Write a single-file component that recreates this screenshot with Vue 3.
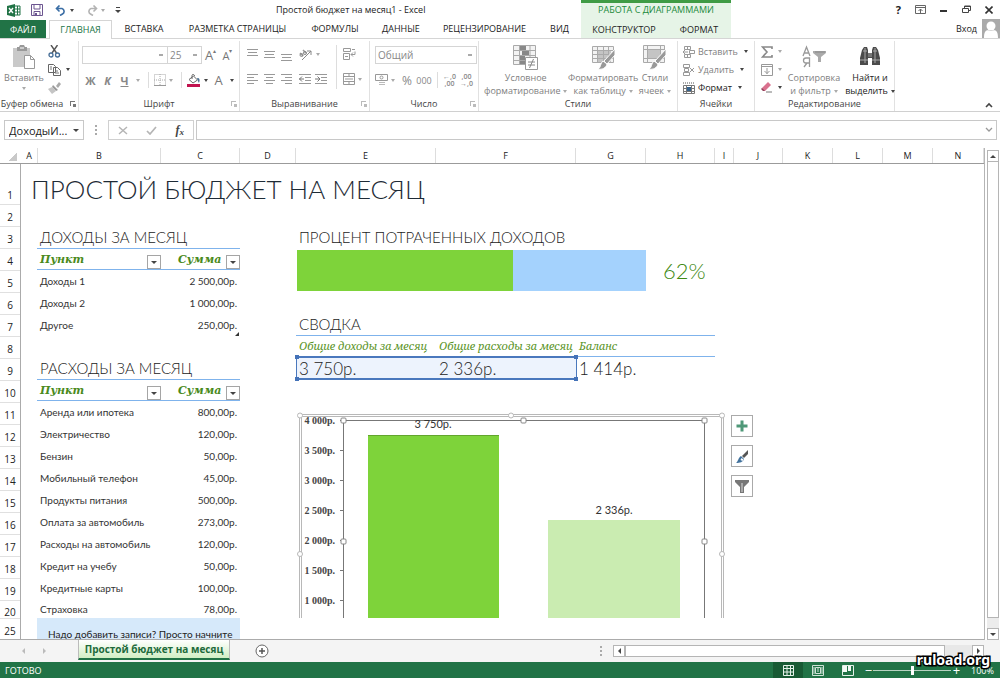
<script setup>
import { ref } from 'vue'

const tabs = ['ФАЙЛ', 'ГЛАВНАЯ', 'ВСТАВКА', 'РАЗМЕТКА СТРАНИЦЫ', 'ФОРМУЛЫ', 'ДАННЫЕ', 'РЕЦЕНЗИРОВАНИЕ', 'ВИД']
const columns = 'ABCDEFGHIJKLMN'.split('')
const rows = [1, 2, 3, 4, 5, 6, 7, 8, 9, 10, 11, 12, 13, 14, 15, 16, 17, 18, 19, 20, 25]
const tables = [
  {
    title: 'ДОХОДЫ ЗА МЕСЯЦ',
    items: [['Доходы 1', '2 500,00р.'], ['Доходы 2', '1 000,00р.'], ['Другое', '250,00р.']]
  },
  {
    title: 'РАСХОДЫ ЗА МЕСЯЦ',
    items: [
      ['Аренда или ипотека', '800,00р.'],
      ['Электричество', '120,00р.'],
      ['Бензин', '50,00р.'],
      ['Мобильный телефон', '45,00р.'],
      ['Продукты питания', '500,00р.'],
      ['Оплата за автомобиль', '273,00р.'],
      ['Расходы на автомобиль', '120,00р.'],
      ['Кредит на учебу', '50,00р.'],
      ['Кредитные карты', '100,00р.'],
      ['Страховка', '78,00р.']
    ]
  }
]
const axis = ['4 000р.', '3 500р.', '3 000р.', '2 500р.', '2 000р.', '1 500р.', '1 000р.']
const spent = 62
const zoom = ref(50)
const nameBox = ref('ДоходыИ...')
const formula = ref('')
</script>

<template>
  <div class="app">
    <header class="top">
      <div class="top-left">
        <div class="titlebar">
          <div class="quick">
            <svg width="14" height="13" viewBox="0 0 14 13"><path d="M0 2 8 0v13L0 11z" fill="#217346"/><path d="M2 4l4 5M6 4 2 9" stroke="#fff" stroke-width="1.4"/><path d="M8 2h5v9H8M8 5h5M8 8h5M10.500 2v9" fill="none" stroke="#217346"/></svg>
            <button aria-label="Сохранить"><svg width="12" height="12" viewBox="0 0 12 12"><path d="M.5.500h11v11H.500z" fill="#fff" stroke="#6c5590"/><path d="M3 1v4h6V1M3 11V7.500h6V11" fill="none" stroke="#6c5590"/><path d="M4 9h2v3H4z" fill="#6c5590"/></svg></button>
            <button aria-label="Отменить"><svg width="12" height="11" viewBox="0 0 12 11"><path d="M1.500 3.500h5.500a3 3 0 0 1 .500 5.500L5 10.500M4.500.500l-3 3 3 3" fill="none" stroke="#3b6ea5" stroke-width="1.600"/></svg><i class="caret"></i></button>
            <button aria-label="Вернуть"><svg width="12" height="11" viewBox="0 0 12 11"><path d="M10.500 3.500H5a3 3 0 0 0-.500 5.500L7 10.500M7.500.500l3 3-3 3" fill="none" stroke="#b3b3b3" stroke-width="1.600"/></svg><i class="caret pale"></i></button>
            <button aria-label="Настройка панели"><svg width="6" height="8" viewBox="0 0 6 8"><path d="M1 1.500h4" stroke="#444"/><path d="M0 4h6L3 7z" fill="#444"/></svg></button>
          </div>
          <h1>Простой бюджет на месяц1 - Excel</h1>
        </div>
        <nav class="tabs">
          <button v-for="(t, i) in tabs" :key="t" :class="{ file: i === 0, active: i === 1 }">{{ t }}</button>
        </nav>
      </div>
      <div class="context">
        <div class="context-name">РАБОТА С ДИАГРАММАМИ</div>
        <nav><button>КОНСТРУКТОР</button><button>ФОРМАТ</button></nav>
      </div>
      <div class="top-right">
        <div class="win">
          <button aria-label="Справка" class="help">?</button>
          <button aria-label="Параметры ленты"><svg width="11" height="9" viewBox="0 0 11 9"><path d="M.500.500h10v8H.500zM1 2.500h9M5.500 8V4M3.500 6l2-2 2 2" fill="none" stroke="#666"/></svg></button>
          <button aria-label="Свернуть"><svg width="8" height="9" viewBox="0 0 8 9"><path d="M0 6h7" stroke="#333" stroke-width="2"/></svg></button>
          <button aria-label="Восстановить"><svg width="9" height="9" viewBox="0 0 9 9"><path d="M.500 3.500h6v4h-6zM2.500 3V1h6v4.500H7M2 1.500h6.500" fill="none" stroke="#444"/></svg></button>
          <button aria-label="Закрыть"><svg width="8" height="8" viewBox="0 0 8 8"><path d="M.500.500l7 7M7.500.500l-7 7" stroke="#333" stroke-width="1.600"/></svg></button>
        </div>
        <div class="login"><a href="#">Вход</a>
          <svg width="18" height="19" viewBox="0 0 18 19"><path d="M0 0h18v19H0z" fill="#aaa"/><circle cx="9" cy="7" r="4.500" fill="#fff"/><path d="M2 19c0-9 4-8 7-7 3-1 7-2 7 7z" fill="#fff"/></svg>
        </div>
      </div>
    </header>

    <section class="ribbon">
      <div class="group clip">
        <div class="body">
          <button class="big dim paste">
            <svg width="24" height="25" viewBox="0 0 24 25"><path d="M1 3h17v19H1z" fill="#c9c9c9"/><path d="M5 2h2l1-2h4l1 2h2v4H5z" fill="#999"/><path d="M8 3h4" stroke="#fff"/><path d="M12.500 10.500h6l4 4v9h-10z" fill="#fff" stroke="#999"/><path d="M18.500 10.500v4h4" fill="none" stroke="#999"/></svg>
            <span>Вставить</span><i class="caret pale"></i>
          </button>
          <div class="stack">
            <button aria-label="Вырезать"><svg width="13" height="13" viewBox="0 0 13 13"><path d="M3 0l5.500 8M9.500 0 4 8" stroke="#555" stroke-width="1.400"/><circle cx="3" cy="10" r="2" fill="none" stroke="#456d96" stroke-width="1.300"/><circle cx="9.500" cy="10" r="2" fill="none" stroke="#456d96" stroke-width="1.300"/></svg></button>
            <button aria-label="Копировать"><svg width="13" height="12" viewBox="0 0 13 12"><path d="M.500.500h5l2 2v6h-7zM5.500 3.500h4l3 3v5h-7z" fill="#fff" stroke="#666"/><path d="M2 3h2M2 5h2M7 7h3M7 9h4" stroke="#777"/></svg><i class="caret"></i></button>
            <button aria-label="Формат по образцу"><svg width="13" height="12" viewBox="0 0 13 12"><path d="M8 4l3-4 2 2-3 4z" fill="#aaa"/><path d="M5 3l5 5-2 1-4-4z" fill="#999"/><path d="M0 7l4-2 4 4-4 3z" fill="#c4c4c4"/></svg></button>
          </div>
        </div>
        <div class="label">Буфер обмена<i class="launch dark"></i></div>
      </div>

      <div class="group font">
        <div class="body">
          <div class="line">
            <select aria-label="Шрифт" class="sel-font"><option></option></select><select aria-label="Размер" class="sel-size"><option>25</option></select>
            <button class="let" aria-label="Увеличить размер">А<sup>▴</sup></button><button class="let sm" aria-label="Уменьшить размер">А<sup>▾</sup></button>
          </div>
          <div class="line tools-font">
            <button class="b">Ж</button><button class="b it">К</button><button class="b un">Ч</button><i class="caret pale"></i>
            <i class="vsep"></i>
            <button aria-label="Границы"><svg width="12" height="12" viewBox="0 0 12 12"><path d="M.500.500h11v11H.500zM6 0v12M0 6h12" fill="none" stroke="#aaa" stroke-dasharray="1 1"/><path d="M0 11.500h12" stroke="#999"/></svg></button><i class="caret pale"></i>
            <i class="vsep"></i>
            <button aria-label="Заливка"><svg width="14" height="13" viewBox="0 0 14 13"><path d="M2 5.500 6.500 2l4 4L6 9z" fill="#fff" stroke="#666"/><path d="M5 5V1.500C5 0 7.500 0 7.500 2" fill="none" stroke="#666"/><path d="M10 4c3 0 3 2 2 5-1-1-1-3-2-5" fill="#4b7193"/><path d="M0 10h13v3H0z" fill="#c1134f"/></svg></button><i class="caret"></i>
            <button class="let">А</button><i class="caret"></i>
          </div>
        </div>
        <div class="label">Шрифт<i class="launch"></i></div>
      </div>

      <div class="group align">
        <div class="body cols">
          <div class="agrid">
            <button aria-label="По верху"><svg width="11" height="14"><path d="M0 2.500h11M1 5.500h9M0 8.500h11" stroke="#999"/></svg></button>
            <button aria-label="По центру"><svg width="11" height="14"><path d="M0 4.500h11M1 7.500h9M0 10.500h11" stroke="#999"/></svg></button>
            <button aria-label="По низу"><svg width="11" height="14"><path d="M0 7.500h11M1 10.500h9M0 13.500h11" stroke="#999"/></svg></button>
            <button class="wide" aria-label="Ориентация"><svg width="13" height="13" viewBox="0 0 13 13"><path d="M3 12l9-9M12 7V3H8" fill="none" stroke="#888"/><path d="M1 5l3 3M4 2l3 3" stroke="#999" stroke-width="1.500"/><circle cx="2.500" cy="7" r="1.500" fill="none" stroke="#888"/><circle cx="6" cy="5" r="1.500" fill="none" stroke="#888"/></svg><i class="caret pale"></i></button>
            <button aria-label="По левому краю"><svg width="11" height="10"><path d="M0 .5h11M0 3.500h7M0 6.500h11M0 9.500h7" stroke="#999"/></svg></button>
            <button aria-label="По середине"><svg width="11" height="10"><path d="M0 .5h11M2 3.500h7M0 6.500h11M2 9.500h7" stroke="#999"/></svg></button>
            <button aria-label="По правому краю"><svg width="11" height="10"><path d="M0 .5h11M4 3.500h7M0 6.500h11M4 9.500h7" stroke="#999"/></svg></button>
            <button class="wide two" aria-label="Отступ"><svg width="12" height="10"><path d="M0 .5h12M6 3.500h6M6 6.500h6M0 9.500h12" stroke="#999"/><path d="M0 5h5M3 2.500 0.500 5 3 7.500" fill="none" stroke="#777"/></svg><svg width="12" height="10"><path d="M0 .5h12M6 3.500h6M6 6.500h6M0 9.500h12" stroke="#999"/><path d="M0 5h5M2.500 2.500 5 5 2.500 7.500" fill="none" stroke="#777"/></svg></button>
          </div>
          <i class="vsep tall"></i>
          <div class="stack2">
            <button aria-label="Перенести текст"><svg width="13" height="12" viewBox="0 0 13 12"><path d="M.500.500h7v3h-7zM.500 5.500h6v6h-6zM9 1.500h3M8 6.500h4v-3M10 4.500l-2 2 2 2M2 8.500h3" fill="none" stroke="#999"/></svg></button>
            <button aria-label="Объединить"><svg width="12" height="12" viewBox="0 0 12 12"><path d="M.500.500h11v11H.500zM0 3.500h12M0 8.500h12M6 0v3M6 9v3M2 6h8" fill="none" stroke="#999"/></svg><i class="caret pale"></i></button>
          </div>
        </div>
        <div class="label">Выравнивание<i class="launch"></i></div>
      </div>

      <div class="group num">
        <div class="body">
          <div class="line"><select aria-label="Числовой формат" class="sel-num"><option>Общий</option></select></div>
          <div class="line tools-num">
            <button aria-label="Денежный"><svg width="13" height="12" viewBox="0 0 13 12"><path d="M.500.500h12v6H.500z" fill="none" stroke="#999"/><circle cx="6.500" cy="3.500" r="1.500" fill="none" stroke="#999"/><path d="M4 8.500h6M4 10.500h6" stroke="#bbb"/></svg></button><i class="caret pale"></i>
            <button class="pct">%</button><button class="zeros">000</button><i class="vsep"></i>
            <button class="dec"><span>←,0</span><span>,00</span></button><button class="dec"><span>,00</span><span>→,0</span></button>
          </div>
        </div>
        <div class="label">Число<i class="launch"></i></div>
      </div>

      <div class="group styles">
        <div class="body">
          <button class="big dim">
            <svg width="25" height="25" viewBox="0 0 25 25"><path d="M.500.500h22v19H.500z" fill="#f3f3f3" stroke="#aaa"/><path d="M7 1h6v4H7zM9 6h7v4H9zM7 11h5v8H7z" fill="#888"/><path d="M0 5.500h23M0 10.500h23M0 15.500h23M6.500 0v20M17 0v20" stroke="#aaa"/><path d="M12.500 12.500h12v12h-12z" fill="#fff" stroke="#999"/><path d="M15 17h7M15 20h7M20.500 14l-4 9" stroke="#888"/></svg>
            <span>Условное</span><span>форматирование<i class="caret pale"></i></span>
          </button>
          <button class="big dim">
            <svg width="25" height="25" viewBox="0 0 25 25"><path d="M1.500 1.500h21v16h-21z" fill="#f3f3f3" stroke="#aaa"/><path d="M7 6h13v11H7z" fill="#c4c4c4"/><path d="M1 5.500h21M1 9.500h21M1 13.500h21M6.500 1v17M12.500 1v17M17.500 1v17" stroke="#aaa"/><path d="M24 4v6l-8 9-3-3z" fill="#999" stroke="#fff"/><path d="M12 16l4 3c-1 4-5 6-9 5 3-1 2-6 5-8" fill="#999" stroke="#fff"/></svg>
            <span>Форматировать</span><span>как таблицу<i class="caret pale"></i></span>
          </button>
          <button class="big dim">
            <svg width="25" height="25" viewBox="0 0 25 25"><path d="M1.500.500h21v17h-21z" fill="#f3f3f3" stroke="#aaa"/><path d="M6 5h13v9H6z" fill="#c4c4c4"/><path d="M1 4.500h21M1 13.500h21M5.500 1v17M18.500 1v17" stroke="#aaa"/><path d="M24 4v6l-8 9-3-3z" fill="#999" stroke="#fff"/><path d="M12 16l4 3c-1 4-5 6-9 5 3-1 2-6 5-8" fill="#999" stroke="#fff"/></svg>
            <span>Стили</span><span>ячеек<i class="caret pale"></i></span>
          </button>
        </div>
        <div class="label">Стили</div>
      </div>

      <div class="group cells">
        <div class="body">
          <button class="dim"><svg width="12" height="12" viewBox="0 0 12 12"><path d="M1.500.500h6v3h-6zM1.500 8.500h6v3h-6zM6.500 4.500h5v3h-5zM4.500 0v3M4.500 9v3M5 6H0M2 4 0 6l2 2" fill="none" stroke="#999"/></svg>Вставить<i class="caret"></i></button>
          <button class="dim"><svg width="12" height="12" viewBox="0 0 12 12"><path d="M.500.500h6v3h-6zM.500 8.500h6v3h-6zM1.500 4.500h4v3h-4zM7 4l4 4M11 4 7 8" fill="none" stroke="#999"/></svg>Удалить<i class="caret"></i></button>
          <button><svg width="12" height="12" viewBox="0 0 12 12"><path d="M.500 3.500h11v8H.500zM0 6.500h12M0 9.500h12M3.500 3v9M8.500 3v9" fill="none" stroke="#777"/><path d="M4 5h4v4H4z" fill="#35638d"/><path d="M0 1h12" stroke="#555" stroke-dasharray="1 1"/></svg>Формат<i class="caret"></i></button>
        </div>
        <div class="label">Ячейки</div>
      </div>

      <div class="group edit">
        <div class="body">
          <div class="stack">
            <button aria-label="Сумма"><svg width="12" height="12" viewBox="0 0 12 12"><path d="M11 3V1H1.500L6 6l-4.500 5H11V9" fill="none" stroke="#888" stroke-width="1.600"/></svg><i class="caret pale"></i></button>
            <button aria-label="Заполнить"><svg width="12" height="12" viewBox="0 0 12 12"><path d="M.500.500h11v11H.500zM0 2.500h12M6 4v6M3.500 7 6 9.500 8.500 7" fill="none" stroke="#999"/></svg><i class="caret pale"></i></button>
            <button aria-label="Очистить"><svg width="12" height="11" viewBox="0 0 12 11"><path d="M1 6 7 0l3 3-6 6H2z" fill="#d9718e"/><path d="M1 6l3 3H2L0 7z" fill="#8d4058"/><path d="M5 10h6" stroke="#777"/></svg><i class="caret"></i></button>
          </div>
          <button class="big dim sort">
            <svg width="24" height="25" viewBox="0 0 24 25"><path d="M11 6h13v2l-5 4v5h-3v-5l-5-4z" fill="#aaa"/><path d="M13 7h10" stroke="#888"/><path d="M1 11 4.500 2 8 11M2 8h5M2 22l3-4M7.500 22v-9H4a2.500 2.500 0 0 0 0 5h3.500" fill="none" stroke="#999" stroke-width="1.300"/></svg>
            <span>Сортировка</span><span>и фильтр<i class="caret pale"></i></span>
          </button>
          <button class="big find">
            <svg width="22" height="25" viewBox="0 0 22 25"><path d="M3 5l2-3h3l1 3v3h4V5l1-3h3l2 3 2 8v7h-8v-7H9v7H1v-7z" fill="#4b4b4b"/><path d="M4 6h4M14 6h4M1 15h8M13 15h8M6 3v15M16 3v15" stroke="#aaa"/><path d="M9 8h4v4H9z" fill="#777"/></svg>
            <span>Найти и</span><span>выделить<i class="caret"></i></span>
          </button>
        </div>
        <div class="label">Редактирование</div>
      </div>
      <button class="collapse" aria-label="Свернуть ленту"><svg width="8" height="6" viewBox="0 0 8 6"><path d="M1 5l3-3 3 3" fill="none" stroke="#444" stroke-width="1.600"/></svg></button>
    </section>

    <div class="fbar">
      <label class="namebox"><input v-model="nameBox" aria-label="Поле имени"><i class="caret"></i></label>
      <i class="dots"></i>
      <div class="fx">
        <button aria-label="Отмена"><svg width="10" height="9" viewBox="0 0 10 9"><path d="M1 1l8 7M9 1 1 8" stroke="#b5b5b5" stroke-width="1.500"/></svg></button>
        <button aria-label="Ввод"><svg width="11" height="9" viewBox="0 0 11 9"><path d="M1 5l3 3 6-7" fill="none" stroke="#b5b5b5" stroke-width="1.700"/></svg></button>
        <button class="f">f<small>x</small></button>
      </div>
      <label class="formula"><input v-model="formula" aria-label="Строка формул"><svg width="8" height="6" viewBox="0 0 8 6"><path d="M1 1l3 3 3-3" fill="none" stroke="#999" stroke-width="1.300"/></svg></label>
    </div>

    <main class="work">
      <div class="grid">
        <div class="colheads"><span class="corner"></span><span v-for="c in columns" :key="c">{{ c }}</span></div>
        <div class="sheet">
          <div class="rowheads"><span v-for="r in rows" :key="r">{{ r }}</span></div>
          <div class="canvas">
            <h2>ПРОСТОЙ БЮДЖЕТ НА МЕСЯЦ</h2>
            <div class="panels">
              <div class="left">
                <section v-for="(t, n) in tables" :key="t.title" class="block">
                  <h3>{{ t.title }}</h3>
                  <table>
                    <thead><tr>
                      <th><div>Пункт<button class="filter" aria-label="Фильтр"><i class="caret"></i></button></div></th>
                      <th><div>Сумма<button class="filter" aria-label="Фильтр"><i class="caret"></i></button></div></th>
                    </tr></thead>
                    <tbody><tr v-for="r in t.items" :key="r[0]"><td>{{ r[0] }}</td><td>{{ r[1] }}</td></tr></tbody>
                  </table>
                  <i v-if="n === 0" class="mark"></i>
                </section>
                <p class="note">Надо добавить записи? Просто начните</p>
              </div>
              <div class="right">
                <h3>ПРОЦЕНТ ПОТРАЧЕННЫХ ДОХОДОВ</h3>
                <div class="progress">
                  <div class="bar"><div class="fill" :style="{ width: spent + '%' }"></div></div>
                  <strong>{{ spent }}%</strong>
                </div>
                <h3>СВОДКА</h3>
                <table class="summary">
                  <caption class="pick"><i></i><i></i><i></i><i></i></caption>
                  <thead><tr><th>Общие доходы за месяц</th><th>Общие расходы за месяц</th><th>Баланс</th></tr></thead>
                  <tbody><tr><td>3 750р.</td><td>2 336р.</td><td>1 414р.</td></tr></tbody>
                </table>
                <div class="chart">
                  <svg width="430" height="206" viewBox="0 0 430 206">
                    <g fill="none" stroke="#b8b8b8"><path d="M3.500 206V2.500h424V206M5.500 206V4.500h420V206"/></g>
                    <path d="M47.500 206V8.500h361V206" fill="none" stroke="#777"/>
                    <g v-for="(a, i) in axis" :key="a">
                      <text x="39" :y="12 + i * 30" class="ax">{{ a }}</text>
                      <path :d="`M44 ${8.5 + i * 30}h3`" stroke="#777"/>
                    </g>
                    <path d="M72 23h131v183H72z" fill="#7ed33a"/><path d="M72 23.500h131" stroke="#62a52d"/>
                    <path d="M252 108h132v98H252z" fill="#caecb1"/>
                    <text x="137" y="16" class="val">3 750р.</text>
                    <text x="318" y="102" class="val">2 336р.</text>
                    <g fill="#fff" stroke="#b8b8b8"><circle cx="4" cy="3.500" r="2.500"/><circle cx="215" cy="3.500" r="2.500"/><circle cx="426" cy="3.500" r="2.500"/><circle cx="4" cy="142" r="2.500"/><circle cx="426" cy="142" r="2.500"/></g>
                    <g fill="#fff" stroke="#888"><rect x="45" y="6" width="5" height="5" rx="1"/><rect x="225" y="6" width="5" height="5" rx="1"/><rect x="406" y="6" width="5" height="5" rx="1"/><rect x="45" y="127" width="5" height="5" rx="1"/><rect x="406" y="127" width="5" height="5" rx="1"/></g>
                  </svg>
                  <div class="chart-tools">
                    <button aria-label="Элементы диаграммы"><svg width="12" height="12" viewBox="0 0 12 12"><path d="M4.500.500h3v4h4v3h-4v4h-3v-4h-4v-3h4z" fill="#4f9878"/></svg></button>
                    <button aria-label="Стили диаграмм"><svg width="14" height="13" viewBox="0 0 14 13"><path d="M13 0v4L9 8 7 6z" fill="#555"/><path d="M6 6l3 3c-1 3-4 4-8 4 2-1 2-5 5-7" fill="#41719c"/><path d="M6.500 8l2 1.500-1 1.500-2-1z" fill="#fff"/></svg></button>
                    <button aria-label="Фильтры диаграммы"><svg width="14" height="13" viewBox="0 0 14 13"><path d="M0 0h14v2L9 7v6H5V7L0 2z" fill="#777"/><path d="M7 3v9" stroke="#ddd"/></svg></button>
                  </div>
                </div>
              </div>
            </div>
          </div>
        </div>
      </div>
      <div class="vscroll">
        <button aria-label="Вверх"><i class="tri up"></i></button><div class="thumb"></div><div class="track"></div><button aria-label="Вниз"><i class="tri down"></i></button>
      </div>
    </main>

    <div class="bottom">
      <div class="arrows"><button aria-label="Назад"><i class="tri leftw pale"></i></button><button aria-label="Вперёд"><i class="tri rightw pale"></i></button></div>
      <button class="sheet-tab">Простой бюджет на месяц</button>
      <button class="plus" aria-label="Новый лист"><svg width="14" height="14" viewBox="0 0 14 14"><circle cx="7" cy="7" r="6" fill="#fff" stroke="#666"/><path d="M7 4v6M4 7h6" stroke="#555" stroke-width="1.500"/></svg></button>
      <i class="dots end"></i>
      <div class="hscroll"><button aria-label="Влево"><i class="tri leftw"></i></button><div class="thumb"></div><div class="track"></div><button aria-label="Вправо"><i class="tri rightw"></i></button></div>
    </div>

    <footer class="status">
      <span>ГОТОВО</span>
      <div class="views">
        <button class="on" aria-label="Обычный"><svg width="11" height="11" viewBox="0 0 11 11"><path d="M.500.500h10v10H.500zM0 3.500h11M0 7h11M4 0v11M7.500 0v11" fill="none" stroke="#e5f1e9"/></svg></button>
        <button aria-label="Разметка страницы"><svg width="12" height="11" viewBox="0 0 12 11"><path d="M.500.500h11v10H.500zM3.500 2.500h5v6h-5zM2 2v7M10 2v7M5 4h2M5 6h2" fill="none" stroke="#cfe3d6"/></svg></button>
        <button aria-label="Страничный"><svg width="12" height="11" viewBox="0 0 12 11"><path d="M.500.500h11v10H.500z" fill="none" stroke="#e5f1e9"/><path d="M1 1h4v6H1zM6 1h3v5H6z" fill="#f3faf5"/></svg></button>
      </div>
      <button class="pm">−</button><input v-model="zoom" type="range" aria-label="Масштаб"><button class="pm">+</button>
      <span class="pc">100%</span>
      <b class="mark-site">ruload.org</b>
    </footer>
  </div>
</template>

<style>
body { margin: 0; background: #fff; }
</style>

<style scoped>
.app { min-height: 100vh; display: flex; flex-direction: column; font: 9px/13px "Open Sans", "Noto Sans", sans-serif; color: #222; background: #fff; }
.app * { box-sizing: border-box; }
button { font: inherit; color: inherit; background: none; border: 0; padding: 0; display: flex; align-items: center; justify-content: center; white-space: nowrap; }
input, select { font: inherit; color: inherit; border: 0; background: none; outline: 0; padding: 0; min-width: 0; }
svg { display: block; flex: none; }
h1, h2, h3, p { margin: 0; font-weight: 400; }
.caret { display: inline-block; flex: none; border: 2px solid transparent; border-top: 3px solid #444; border-bottom: 0; margin-left: 3px; vertical-align: middle; }
.caret.pale { border-top-color: #aaa; }
.dim { color: #808080; }

.top { display: flex; height: 38px; }
.top-left { flex: none; }
.titlebar { display: flex; height: 20px; align-items: center; }
.quick { display: flex; align-items: center; gap: 10px; padding-left: 7px; width: 276px; }
.quick button:nth-child(3), .quick button:nth-child(4) { margin-left: 2px; }
h1 { font-size: 9px; line-height: 20px; color: #222; }
.tabs { display: grid; grid-template-columns: 46px 66px 64px 123px 72px 60px 107px 43px; height: 18px; }
.tabs button { height: 18px; line-height: 18px; }
.tabs .file { background: #217346; color: #fff; height: 19px; }
.tabs .active { color: #217346; margin-left: 3px; border: 1px solid #d5d5d5; border-bottom: 0; background: #fff; position: relative; height: 19px; }
.context { flex: none; width: 150px; background: #e6f4e7; border-top: 3px solid #3f9b45; }
.context-name { height: 17px; line-height: 14px; text-align: center; color: #218a3b; }
.context nav { display: grid; grid-template-columns: 86px 64px; height: 18px; }
.top-right { flex: 1; display: flex; flex-direction: column; align-items: flex-end; }
.win { display: flex; height: 19px; align-items: center; gap: 14px; padding-right: 7px; }
.help { font-weight: 700; font-size: 11px; }
.login { display: flex; align-items: center; gap: 5px; }
.login a { color: #222; text-decoration: none; }

.ribbon { display: flex; height: 74px; border-top: 1px solid #d5d5d5; border-bottom: 1px solid #d0d0d0; }
.group { flex: none; display: flex; flex-direction: column; border-right: 1px solid #e1e1e1; margin-top: 2px; }
.group .body { flex: 1; display: flex; padding-top: 4px; }
.label { text-align: center; line-height: 13px; height: 13px; color: #444; display: flex; justify-content: center; position: relative; white-space: nowrap; margin-bottom: 1px; }
.launch { position: absolute; right: 3px; top: 4px; width: 5px; height: 5px; border-left: 1px solid #bbb; border-top: 1px solid #bbb; }
.launch::after { content: ""; position: absolute; right: -1px; bottom: -1px; width: 3px; height: 3px; background: #bbb; }
.launch.dark { border-color: #777; } .launch.dark::after { background: #777; }
.clip { width: 79px; } .font { width: 161px; } .align { width: 130px; } .num { width: 109px; } .styles { width: 199px; } .cells { width: 77px; } .edit { width: 140px; }
.clip .label { padding-right: 14px; }
.big { flex-direction: column; justify-content: flex-start; }
.big svg { margin-bottom: 1px; }
.paste { width: 48px; } .paste .caret { margin: 3px 0 0; }
.stack { display: flex; flex-direction: column; gap: 5px; align-items: flex-start; }
.stack button { height: 13px; }
.stack .caret { margin-left: 5px; }
.font .body, .num .body, .cells .body { flex-direction: column; }
.line { display: flex; align-items: center; height: 18px; }
.line select { height: 18px; border: 1px solid #d5d5d5; appearance: none; padding-left: 2px; color: #888; background: linear-gradient(#aaa, #aaa) no-repeat right 4px center / 4px 2px; }
.font .line { padding-left: 3px; margin-top: 1px; }
.sel-font { width: 86px; } .sel-size { width: 35px; margin-left: -1px; }
.line .sel-font, .line .sel-size, .line .sel-num { font-size: 10px; }
.let { font-size: 13px; color: #777; width: 17px; } .let sup { font-size: 6px; margin-bottom: 8px; }
.let.sm { font-size: 11px; }
.font .tools-font { margin-top: 7px; }
.b { width: 17px; font-weight: 700; font-size: 11px; color: #888; } .it { font-style: italic; } .un { text-decoration: underline; }
.vsep { width: 1px; height: 16px; background: #ddd; margin: 0 5px 0 7px; flex: none; }
.tools-font .let { margin-left: 1px; }
.tools-font .caret { margin-right: 1px; }
.agrid { display: grid; grid-template-columns: 17px 17px 17px 38px; grid-template-rows: 18px 32px; align-items: center; padding-left: 4px; }
.wide { justify-content: flex-start; padding-left: 4px; gap: 1px; } .two { gap: 4px; }
.vsep.tall { height: 44px; margin: 0 6px 0 3px; }
.stack2 { display: grid; grid-template-rows: 18px 32px; align-items: center; }
.stack2 button { justify-content: flex-start; }
.num .line { padding-left: 5px; margin-top: 1px; } .num .tools-num { margin-top: 7px; color: #888; }
.sel-num { width: 102px; }
.pct { font-size: 12px; width: 14px; margin-left: 5px; } .zeros { font-size: 9px; width: 20px; }
.dec { flex-direction: column; font-size: 7px; line-height: 7px; width: 17px; font-weight: 600; }
.tools-num .vsep { margin: 0 3px; }
.styles .body { justify-content: space-between; padding: 4px 6px 0 5px; }
.cells .body { align-items: flex-start; gap: 5px; padding-left: 5px; }
.cells button { height: 13px; gap: 3px; }
.cells button .caret { margin-left: 3px; }
.edit .body { padding-left: 6px; gap: 3px; }
.sort { width: 60px; } .find { width: 48px; }
.collapse { margin: auto 7px 3px auto; }

.fbar { display: flex; height: 36px; padding: 8px 3px 8px 4px; align-items: stretch; }
.namebox { width: 80px; display: flex; align-items: center; border: 1px solid #c8c8c8; padding: 0 4px; font-size: 11px; }
.namebox input { flex: 1; width: 60px; } .namebox .caret { border-width: 3px 3px 0; }
.dots { width: 2px; height: 10px; margin: 0 11px; align-self: center; background: linear-gradient(#aaa 2px, transparent 2px) 0 0 / 2px 4px; }
.fx { width: 86px; border: 1px solid #d0d0d0; display: flex; justify-content: space-around; }
.f { font: italic 700 12px "Liberation Serif", serif; color: #444; } .f small { font-size: 9px; margin-top: 3px; }
.formula { flex: 1; margin-left: 2px; border: 1px solid #c8c8c8; display: flex; align-items: center; padding-right: 3px; }
.formula input { flex: 1; }

.work { flex: 1; display: flex; min-height: 0; }
.grid { flex: 1; display: flex; flex-direction: column; border-right: 1px solid #b5b5b5; min-width: 0; overflow: hidden; }
.colheads { display: grid; grid-template-columns: 21px 17px 123px 79px 56px 140px 140px 70px 69px 19px 49px 50px 50px 50px 1fr; height: 16px; border-bottom: 1px solid #9b9b9b; text-align: center; line-height: 15px; }
.colheads span { border-right: 1px solid #ddd; }
.colheads .corner { margin: 4px 4px 2px 9px; border: 0; background: linear-gradient(135deg, transparent 50%, #c9c9c9 50%); }
.sheet { flex: 1; display: flex; border-bottom: 1px solid #ababab; }
.rowheads { width: 21px; border-right: 1px solid #ababab; display: flex; flex-direction: column; font-size: 10px; }
.rowheads span { height: 22px; line-height: 18px; padding-top: 3px; text-align: center; border-bottom: 1px solid #e0e0e0; }
.rowheads span:first-child { height: 41px; padding-top: 22px; }
.rowheads span:nth-child(20) { height: 18px; line-height: 16px; }
.rowheads span:last-child { border: 0; height: 20px; line-height: 18px; }
.canvas { flex: 1; padding-left: 10px; font-family: Lato, "Open Sans", sans-serif; }
h2 { font-size: 26px; line-height: 41px; height: 41px; padding-top: 5px; font-weight: 300; color: #1e2b36; white-space: nowrap; }
.panels { display: flex; padding: 21px 0 0 6px; gap: 56px; }
.left { width: 203px; flex: none; }
h3 { font-size: 15px; line-height: 22px; height: 22px; font-weight: 300; color: #222; padding-left: 3px; white-space: nowrap; }
.block { position: relative; margin-bottom: 21px; }
.block:nth-of-type(2) { margin-bottom: 0; }
table { border-collapse: separate; border-spacing: 0; width: 100%; table-layout: fixed; }
td, th { padding: 0 3px; height: 22px; line-height: 20px; text-align: left; white-space: nowrap; }
.left th { border-top: 1px solid #7fb3ec; border-bottom: 1px solid #7fb3ec; font: italic 700 11px/20px "DejaVu Serif", serif; color: #4a8a1c; }
.left th:first-child { width: 124px; padding-right: 0; }
.left th div { display: flex; justify-content: space-between; height: 20px; line-height: 22px; }
.left th:last-child { padding: 0 0 0 17px; }
.filter { width: 14px; height: 14px; border: 1px solid #a5a5a5; background: #fff; margin-top: 6px; }
.filter .caret { margin: 0; border-width: 3px 3px 0; }
.left td { font-size: 10px; color: #333; }
.left td:last-child { text-align: right; }
.block:nth-of-type(2) tr:last-child td { height: 19px; line-height: 16px; }
.mark { position: absolute; right: 1px; bottom: 0; border: 2px solid #333; border-left-color: transparent; border-top-color: transparent; }
.note { background: #d6e9fa; height: 21px; line-height: 32px; padding-left: 11px; font-size: 10px; color: #222; overflow: hidden; white-space: nowrap; }
.right { flex: 1; }
.progress { display: flex; align-items: center; padding: 2px 0 1px 1px; height: 44px; margin-bottom: 21px; gap: 17px; }
.bar { width: 349px; height: 41px; background: #a4d2fd; } .fill { height: 100%; background: #7ed33a; }
.progress strong { font-size: 22px; line-height: 40px; font-weight: 300; color: #3f8a14; }
.summary { width: 419px; position: relative; }
.summary th { border-top: 1px solid #7fb3ec; border-bottom: 1px solid #7fb3ec; font: italic 400 11px/20px "Noto Serif", "DejaVu Serif", serif; color: #5b9428; }
.summary th:nth-child(-n+2) { width: 140px; }
.summary td { height: 23px; font-size: 17px; font-weight: 300; color: #222; }
.summary td, .summary th, .right h3 { padding: 0 3px; }
.summary td:nth-child(-n+2) { background: #edf3fd; }
.pick { position: absolute; left: 0; top: 21px; width: 281px; height: 24px; border: 2px solid #4a78bd; border-width: 2px 1px; }
.pick i { position: absolute; width: 4px; height: 4px; background: #4472b8; left: -2px; top: -3px; }
.pick i:nth-child(even) { left: auto; right: -2px; } .pick i:nth-child(n+3) { top: auto; bottom: -3px; }
.chart { display: flex; margin-top: 32px; height: 206px; gap: 5px; overflow: hidden; }
.ax { font: 700 10px "Liberation Serif", serif; fill: #444; text-anchor: end; }
.val { font: 11px Lato, sans-serif; fill: #333; text-anchor: middle; }
.chart-tools { display: flex; flex-direction: column; gap: 8px; padding-top: 3px; }
.chart-tools button { width: 22px; height: 22px; border: 1px solid #aaa; background: #fff; }

.vscroll { width: 15px; display: flex; flex-direction: column; padding: 2px 1px 0 2px; }
.vscroll button { height: 12px; border: 1px solid #b5b5b5; background: #fff; }
.vscroll .thumb { flex: 1; border: 1px solid #b5b5b5; border-top: 0; } .vscroll .track { height: 10px; background: #ececec; }
.tri { border: 3px solid transparent; }
.up { border-bottom: 3px solid #444; border-top: 0; } .down { border-top: 3px solid #444; border-bottom: 0; }
.leftw { border-right: 3px solid #444; border-left: 0; } .rightw { border-left: 3px solid #444; border-right: 0; }
.leftw.pale { border-right-color: #bbb; } .rightw.pale { border-left-color: #bbb; }

.bottom { display: flex; height: 22px; background: #f4f4f4; align-items: center; padding-right: 16px; }
.arrows { width: 78px; display: flex; gap: 18px; padding-left: 22px; }
.sheet-tab { height: 20px; align-self: flex-start; width: 152px; font-size: 10px; font-weight: 700; color: #1e6b3c; background: linear-gradient(#fff, #d2efc4); border: 1px solid #bbb; border-top: 0; border-bottom: 2px solid #217346; }
.plus { margin-left: 25px; }
.dots.end { margin-left: auto; }
.hscroll { display: flex; width: 371px; height: 12px; }
.hscroll button { width: 12px; border: 1px solid #b5b5b5; background: #fff; }
.hscroll .thumb { flex: 1; border: 1px solid #b5b5b5; background: #fff; } .hscroll .track { width: 27px; background: #e8e8e8; }

.status { display: flex; align-items: center; height: 17px; background: #217346; color: #fff; padding: 0 6px 0 5px; position: relative; }
.views { display: flex; margin-left: auto; height: 17px; }
.views button { width: 30px; } .views .on { background: #185a34; }
.pm { width: 9px; margin-left: 1px; font-size: 13px; }
input[type="range"] { appearance: none; margin: 0; width: 78px; height: 11px; background: linear-gradient(#b7d3c1, #b7d3c1) no-repeat center / 100% 1px; }
input[type="range"]::-webkit-slider-thumb { appearance: none; width: 3px; height: 9px; background: #fff; }
.pc { margin-left: 10px; width: 23px; }
.mark-site { position: absolute; right: 10px; top: -10px; font: 700 14px/16px "Noto Sans", sans-serif; color: #fff; -webkit-text-stroke: 3px #000; paint-order: stroke fill; }
</style>
